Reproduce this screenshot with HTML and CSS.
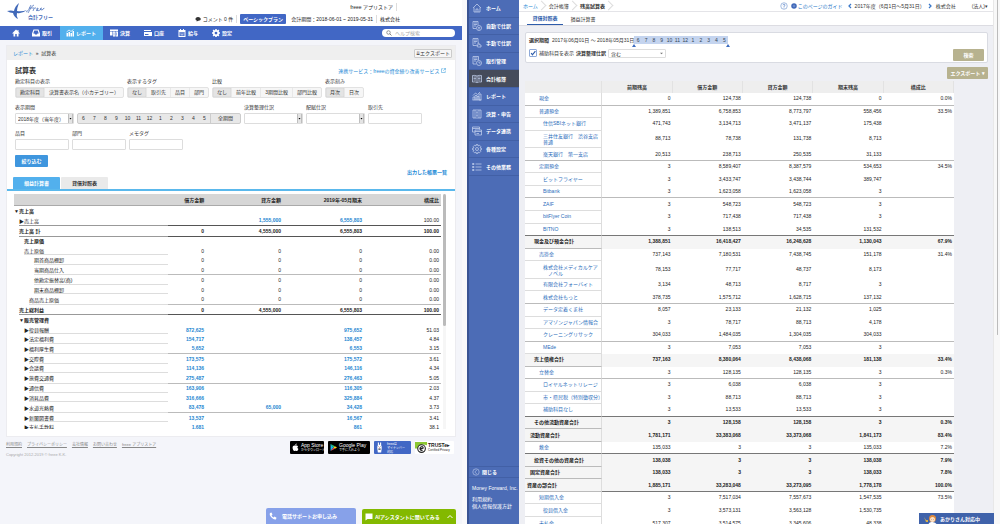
FILE: index.html
```html
<!DOCTYPE html>
<html lang="ja">
<head>
<meta charset="utf-8">
<title>試算表</title>
<link rel="stylesheet" href="styles.css">
</head>
<body>
<div class="windows">

<section class="fr">
  <div class="fr-page">
    <header class="fr-head">
      <svg class="fr-logo" viewBox="0 0 48 18" role="img" aria-label="freee 会計フリー">
        <path d="M0 8Q4 7 7 8Q8 3 12 0Q10 5 10 8Q15 9 20 7Q15 11 10 10Q9 13 11 16Q7 14 6 10Q3 10 0 8Z" fill="#4068b8"/>
        <path d="M19 9C22 8 22 5 24 2M21 10C23 7 24 3 27 2M22 5L27 5M26 8L27 5.500Q28 4.500 29 5M29 8Q32 6 31 5Q29 5 30 7.500Q32 8.500 34 6Q35 4 33.500 5.500Q33 8 36 6.500Q38 4 36.500 5.500" fill="none" stroke="#4068b8" stroke-width=".7"/>
        <text x="21" y="16" class="fr-logo-text">会計フリー</text>
      </svg>
      <div class="fr-head-info">
        <div class="fr-head-row"><a href="#" class="plain">freee アプリストア</a><i class="vsep"></i></div>
        <div class="fr-head-row">
          <svg class="ic6" viewBox="0 0 12 12"><path d="M6 2C2.500 2 1 4 1 6S2.500 9 4 9L3 11L7 9.500C10 9.500 11.500 8 11.500 6S9.500 2 6 2Z" fill="#333"/></svg>
          <a href="#" class="plain">コメント 0 件</a><i class="vsep"></i>
          <button class="plan">ベーシックプラン</button>
          <span class="period">会計期間：2018-06-01 ~ 2019-05-31</span><i class="vsep"></i>
          <span class="fr-company">株式会社</span>
        </div>
      </div>
    </header>
    <nav class="fr-nav">
      <a href="#" class="n-home" aria-label="ホーム"><svg class="ic8" viewBox="0 0 16 16"><path d="M8 1L0 9H3V15H6.500V10H9.500V15H13V9H16L13 6V2H11V4Z" fill="#fff"/></svg></a>
      <a href="#" class="n-2"><svg class="ic8" viewBox="0 0 16 16"><path d="M3 1H13L16 9V15H0V9ZM4.500 3L2.500 9H5L6 11H10L11 9H13.500L11.500 3Z" fill="#fff" fill-rule="evenodd"/></svg>取引</a>
      <a href="#" class="n-3 on"><svg class="ic8" viewBox="0 0 16 16"><path d="M1 8H4V15H1ZM5 6H8V15H5ZM9 8H12V15H9ZM13 4H16V15H13Z" fill="#fff"/><path d="M1 6L6 2L10 5L15 1" stroke="#fff" stroke-width="1.500" fill="none"/></svg>レポート</a>
      <a href="#" class="n-4"><svg class="ic8" viewBox="0 0 16 16"><path d="M0 1H16V4H0ZM0 5H5V13H0ZM6 5H10V15H6ZM11 5H16V15H11ZM12 7V13H13V7ZM7.500 7V13H8.500V7Z" fill="#fff" fill-rule="evenodd"/></svg>決算</a>
      <a href="#" class="n-5"><svg class="ic8" viewBox="0 0 16 16"><path d="M0 2H14V4H0ZM0 6H16V14H0ZM2 10V12H9V10Z" fill="#fff" fill-rule="evenodd"/></svg>口座</a>
      <a href="#" class="n-6"><svg class="ic8" viewBox="0 0 16 16"><path d="M2 2H4V0H6V2H10V0H12V2H15V16H1V2ZM3 6V14H13V6ZM5 7H7V9H5ZM9 7H11V9H9ZM5 11H11V12.500H5Z" fill="#fff" fill-rule="evenodd"/></svg>給与</a>
      <a href="#" class="n-7"><svg class="ic8" viewBox="0 0 16 16"><circle cx="8" cy="8" r="4.500" fill="none" stroke="#fff" stroke-width="3.500"/><path d="M8 0V3M8 13V16M0 8H3M13 8H16M2.300 2.300L4.500 4.500M11.500 11.500L13.700 13.700M2.300 13.700L4.500 11.500M11.500 4.500L13.700 2.300" stroke="#fff" stroke-width="3"/></svg>設定</a>
      <label class="fr-search"><svg class="ic6" viewBox="0 0 12 12"><circle cx="5" cy="5" r="3.500" fill="none" stroke="#777" stroke-width="1.500"/><path d="M7.500 7.500L11 11" stroke="#777" stroke-width="1.800"/></svg><input type="search" placeholder="ヘルプ検索" aria-label="ヘルプ検索"></label>
    </nav>
    <main class="panel">
      <div class="crumbs"><span><a href="#">レポート</a>&nbsp; » &nbsp;試算表</span><button class="btn-lite">⇊エクスポート</button></div>
      <div class="panel-body">
        <div class="title-row"><h1>試算表</h1><a href="#">連携サービス：freeeの資金繰り改善サービス <svg class="ic4" viewBox="0 0 10 10"><path d="M5 1.500H1V9H8.500V5M6 1H9V4M9 1L4.500 5.500" fill="none" stroke="#2f96d8"/></svg></a></div>
        <div class="fields">
          <div class="field"><span>勘定科目の表示</span><div class="seg"><button class="on">勘定科目</button><button>決算書表示名（小カテゴリー）</button></div></div>
          <div class="field"><span>表示するタグ</span><div class="seg"><button class="on">なし</button><button>取引先</button><button>品目</button><button>部門</button></div></div>
          <div class="field"><span>比較</span><div class="seg"><button class="on">なし</button><button>前年比較</button><button>3期間比較</button><button>部門比較</button></div></div>
          <div class="field"><span>表示刻み</span><div class="seg"><button class="on">月次</button><button>日次</button></div></div>
        </div>
        <div class="fields">
          <div class="field"><label for="term">表示期間</label><div class="pair"><select id="term" class="sel"><option>2018年度（当年度）</option></select>
            <div class="seg months"><button>6</button><button>7</button><button>8</button><button>9</button><button>10</button><button>11</button><button>12</button><button>1</button><button>2</button><button>3</button><button>4</button><button>5</button><button class="all">全期間</button></div></div></div>
          <div class="field"><label for="adj">決算整理仕訳</label><select id="adj" class="sel"><option></option></select></div>
          <div class="field"><label for="alloc">配賦仕訳</label><select id="alloc" class="sel"><option></option></select></div>
          <div class="field"><label for="partner">取引先</label><input id="partner" class="inp"></div>
        </div>
        <div class="fields">
          <div class="field"><label for="item">品目</label><input id="item" class="inp"></div>
          <div class="field"><label for="dept">部門</label><input id="dept" class="inp"></div>
          <div class="field"><label for="memo">メモタグ</label><input id="memo" class="inp"></div>
        </div>
        <button class="btn-blue">絞り込む</button>
      </div>
      <div class="tabs"><button class="on">損益計算書</button><button>貸借対照表</button><a href="#">出力した帳票一覧</a></div>
      <div class="sheet">
        <div class="scroll">
        <table class="pl">
          <colgroup><col class="c1"><col class="c2"><col class="c3"><col class="c4"><col class="c3"></colgroup>
          <thead><tr><th></th><th>借方金額</th><th>貸方金額</th><th>2019年-05月期末</th><th>構成比</th></tr></thead>
          <tbody>
          <tr class="b"><td>▼売上高<td><td><td><td></tr>
          <tr class="i1 dk"><td>▶売上高<td><td><a href="#">1,555,000</a><td><a href="#">6,555,803</a><td>100.00</tr>
          <tr class="i1 b dk"><td>売上高 計<td>0<td>4,555,000<td>6,555,803<td>100.00</tr>
          <tr class="i2 b nl"><td>売上原価<td><td><td><td></tr>
          <tr class="i2"><td>売上原価<td>0<td>0<td>0<td>0.00</tr>
          <tr class="i4"><td>期首商品棚卸<td>0<td>0<td>0<td>0.00</tr>
          <tr class="i4 gr"><td>当期商品仕入<td>0<td>0<td>0<td>0.00</tr>
          <tr class="i4"><td>他勘定振替高(商)<td>0<td>0<td>0<td>0.00</tr>
          <tr class="i4"><td>期末商品棚卸<td>0<td>0<td>0<td>0.00</tr>
          <tr class="i3 gr"><td>商品売上原価<td>0<td>0<td>0<td>0.00</tr>
          <tr class="i1 b dk"><td>売上総利益<td>0<td>4,555,000<td>6,555,803<td>100.00</tr>
          <tr class="i1 b nl"><td>▼販売管理費<td><td><td><td></tr>
          <tr class="i2 s"><td>▶役員報酬<td><a href="#">872,625</a><td><td><a href="#">975,652</a><td>51.03</tr>
          <tr class="i2 s"><td>▶法定福利費<td><a href="#">154,717</a><td><td><a href="#">138,457</a><td>4.84</tr>
          <tr class="i2 s gr"><td>▶福利厚生費<td><a href="#">5,652</a><td><td><a href="#">6,553</a><td>3.15</tr>
          <tr class="i2 s"><td>▶交際費<td><a href="#">173,575</a><td><td><a href="#">175,572</a><td>3.61</tr>
          <tr class="i2 s"><td>▶会議費<td><a href="#">114,136</a><td><td><a href="#">146,116</a><td>4.34</tr>
          <tr class="i2 s gr"><td>▶旅費交通費<td><a href="#">275,487</a><td><td><a href="#">276,463</a><td>5.05</tr>
          <tr class="i2 s"><td>▶通信費<td><a href="#">163,906</a><td><td><a href="#">116,305</a><td>2.03</tr>
          <tr class="i2 s"><td>▶消耗品費<td><a href="#">316,666</a><td><td><a href="#">325,884</a><td>4.37</tr>
          <tr class="i2 s gr"><td>▶水道光熱費<td><a href="#">83,478</a><td><a href="#">65,000</a><td><a href="#">34,428</a><td>3.73</tr>
          <tr class="i2 s"><td>▶新聞図書費<td><a href="#">13,537</a><td><td><a href="#">16,567</a><td>3.41</tr>
          <tr class="i2 s nl"><td>▶支払手数料<td><a href="#">1,681</a><td><td><a href="#">861</a><td>38.1</tr>
          </tbody>
        </table>
        </div>
        <div class="track"><div class="thumb"></div></div>
      </div>
    </main>
    <footer class="fr-foot">
      <div><p class="foot-links"><a href="#">利用規約</a><a href="#">プライバシーポリシー</a><a href="#">会社情報</a><a href="#">お問い合わせ</a><a href="#">freee アプリストア</a></p>
      <p class="copy">Copyright 2012-2019 © freee K.K.</p></div>
      <div class="badges">
        <a href="#" class="badge app"><svg viewBox="0 0 12 14"><path d="M8 0C8 2 7 3 5.500 3C5.500 1.500 6.500 .5 8 0ZM6 4C7 3.500 9 3 10.500 5C8.500 6.500 9 8.500 11 9.500C10 12 9 13.500 7.500 13C6.500 12.500 6 12.500 5 13C3 14 1 10 1 7.500C1 4 3.500 3 6 4Z" fill="#fff"/></svg><span><b>App Store</b><small>からダウンロード</small></span></a>
        <a href="#" class="badge play"><svg viewBox="0 0 12 14"><path d="M1 1V13L6 7Z" fill="#19b8f0"/><path d="M1 1L8.500 5L6 7Z" fill="#20d070"/><path d="M1 13L8.500 9L6 7Z" fill="#f04050"/><path d="M8.500 5L12 7L8.500 9L6 7Z" fill="#ffd020"/></svg><span><b>Google Play</b><small>で手に入れよう</small></span></a>
        <a href="#" class="badge mynum"><svg viewBox="0 0 12 20"><path d="M3 1H5V5H7V1H9V6L10 8V12L9 19H3L2 12V8L3 6Z" fill="#fff"/><path d="M4 8H5V9H4ZM7 8H8V9H7ZM4 12H8V14H4Z" fill="#345"/><path d="M5 10H7V11H5Z" fill="#e55"/></svg><small>freeeは<br>マイナンバー<br>対応</small></a>
        <a href="#" class="badge truste"><svg viewBox="0 0 22 20"><path d="M0 0H22V6L14 4L4 12H0Z" fill="#8cc832"/><circle cx="12" cy="12" r="7" fill="#fff" stroke="#222" stroke-width="2"/><path d="M9 13L15 11Q15 8 12 8.500Q9 9 9 12.500Q10 16 14 15" fill="none" stroke="#222" stroke-width="2"/></svg><span><b>TRUSTe▸</b><small>Certified Privacy</small></span></a>
      </div>
    </footer>
    <div class="chat">
      <button class="phone"><svg class="ic8" viewBox="0 0 16 16"><path d="M2 2L5 1L7 5L5 7Q6.500 10 9 11L11 9L15 11.500L14 14.500Q10 16 5 11T2 2Z" fill="#fff"/></svg><span>電話サポートお申し込み</span></button>
      <button class="ai"><svg class="ic8" viewBox="0 0 16 16"><path d="M1 1H15V12H5L1 15Z" fill="#fff"/></svg><span>AIアシスタントに聞いてみる</span><svg class="ic6" viewBox="0 0 12 12"><path d="M1 8L6 3L11 8" fill="none" stroke="#fff" stroke-width="2"/></svg></button>
    </div>
  </div>
</section>

<section class="mf">
  <aside class="side">
    <nav class="side-nav">
      <a href="#"><svg viewBox="0 0 20 20"><path d="M2 10L10 2L18 10M4 9V18H16V9M8 18V12H12V18"/></svg>ホーム</a>
      <a href="#"><svg viewBox="0 0 20 20"><path d="M8 15H2V1H12V8M4 4H10M4 7H10M4 10H8"/><circle cx="14" cy="14" r="5"/><path d="M12 12L14 14.500L16 12M14 14V17"/></svg>自動で仕訳</a>
      <a href="#"><svg viewBox="0 0 20 20"><path d="M8 15H2V1H12V8M4 4H10M4 7H10M4 10H8M11 18L9 14L12 15V9L14 10V13L18 14V18Z"/></svg>手動で仕訳</a>
      <a href="#"><svg viewBox="0 0 20 20"><path d="M8 16H2V1H13V8M4 4H11M4 7H11M4 10H8"/><circle cx="14" cy="14" r="5"/><path d="M14 11V14H17"/></svg>取引管理</a>
      <a href="#" class="on"><svg viewBox="0 0 20 20"><path d="M10 4Q6 2 1 3V16Q6 15 10 17Q14 15 19 16V3Q14 2 10 4V17M3 6H8M3 9H8M3 12H8M12 6H17M12 9H17M12 12H17"/></svg>会計帳簿</a>
      <a href="#"><svg viewBox="0 0 20 20"><path d="M2 18V12H6V18M6 18V9H10V18M10 18V11H14V18M14 18V6H18V18ZM2 9L7 4L11 7L16 2M1 18H19"/></svg>レポート</a>
      <a href="#"><svg viewBox="0 0 20 20"><path d="M2 2H18V18H2ZM6 2V18M14 2V18M8 6H12M8 14H12M10 6V14"/></svg>決算・申告</a>
      <a href="#"><svg viewBox="0 0 20 20"><path d="M6 12H1V2H15V7M1 5H15M6 8H19V18H6ZM6 11H19M9 15H14"/></svg>データ連携</a>
      <a href="#"><svg viewBox="0 0 20 20"><circle cx="10" cy="10" r="3"/><path d="M8.500 1H11.500L12 4L15 2.500L17.500 5L16 8L19 8.500V11.500L16 12L17.500 15L15 17.500L12 16L11.500 19H8.500L8 16L5 17.500L2.500 15L4 12L1 11.500V8.500L4 8L2.500 5L5 2.500L8 4Z"/></svg>各種設定</a>
      <a href="#"><svg viewBox="0 0 20 20"><path d="M7 4H19M7 10H19M7 16H19M1 3H4V5H1ZM1 9H4V11H1ZM1 15H4V17H1Z"/></svg>その他業務</a>
    </nav>
    <button class="close"><svg viewBox="0 0 20 20"><circle cx="10" cy="10" r="8"/><path d="M12 5L7 10L12 15"/></svg>閉じる</button>
    <p class="side-foot"><a href="#">Money Forward, Inc.</a><a href="#" class="gap">利用規約</a><a href="#">個人情報保護方針</a></p>
  </aside>
  <div class="mf-main">
    <div class="mf-top">
      <ol class="path"><li><a href="#">ホーム</a></li><li>会計帳簿</li><li><b>残高試算表</b></li></ol>
      <div class="mf-user">
        <svg class="ic8" viewBox="0 0 16 16"><circle cx="8" cy="8" r="6.500" fill="#fff" stroke="#4a78c4"/><path d="M6 6.500Q6 4.500 8 4.500T10 6.500Q10 7.500 8 8.500V10M8 11V12.500" fill="none" stroke="#4a78c4" stroke-width="1.300"/></svg>
        <a href="#" class="guide"><svg class="ic6" viewBox="0 0 12 12"><circle cx="6" cy="6" r="5.500" fill="#4068b8"/><path d="M3.500 6H8.500M6 3.500V8.500" stroke="#9db5e0"/></svg>このページのガイド</a>
        <svg class="ic6" viewBox="0 0 12 12"><path d="M8 2L4 6L8 10" fill="none" stroke="#3a78c8" stroke-width="2.500"/></svg>
        <span>2017年度（6月1日〜5月31日）</span>
        <svg class="ic6" viewBox="0 0 12 12"><path d="M4 2L8 6L4 10" fill="none" stroke="#3a78c8" stroke-width="2.500"/></svg>
        <span class="org">株式会社</span><span>(法人)▾</span>
      </div>
    </div>
    <div class="mf-tabs"><a href="#" class="on">貸借対照表</a><a href="#">損益計算書</a></div>
    <div class="mf-body">
      <div class="filter">
        <div class="filter-fields">
          <div class="frow"><b>選択期間</b><span class="dates">2017年06月01日 ～ 2018年05月31日</span>
            <div class="range"><span>6</span><span>7</span><span>8</span><span>9</span><span>10</span><span>11</span><span>12</span><span>1</span><span>2</span><span>3</span><span>4</span><span>5</span><i class="knob l"></i><i class="knob r"></i></div></div>
          <div class="frow"><label class="chk"><input type="checkbox" checked>補助科目を表示</label><label class="adj"><b>決算整理仕訳</b><select><option>含む</option></select></label></div>
        </div>
        <button class="btn-khaki search">検索</button>
      </div>
      <div class="export"><button class="btn-khaki">エクスポート ▾</button></div>
      <table class="bs">
        <colgroup><col class="n"><col><col><col><col><col></colgroup>
        <thead><tr><th></th><th>前期残高</th><th>借方金額</th><th>貸方金額</th><th>期末残高</th><th>構成比</th></tr></thead>
        <tbody>
        <tr class="gr"><td><a href="#">現金</a><td>0<td>124,738<td>124,738<td>0<td>0.0%</tr>
        <tr><td><a href="#">普通預金</a><td>1,389,851<td>6,758,853<td>8,773,797<td>558,456<td>33.5%</tr>
        <tr class="sub"><td><a href="#">住信SBIネット銀行</a><td>471,743<td>3,134,713<td>3,471,137<td>175,438<td></tr>
        <tr class="sub two"><td><a href="#">三井住友銀行　渋谷支店普通</a><td>88,713<td>78,738<td>131,738<td>8,713<td></tr>
        <tr class="sub gr"><td><a href="#">楽天銀行　第一支店</a><td>20,513<td>238,713<td>250,535<td>31,133<td></tr>
        <tr><td><a href="#">定期預金</a><td>3<td>8,589,407<td>8,387,579<td>534,653<td>34.5%</tr>
        <tr class="sub"><td><a href="#">ビットフライヤー</a><td>3<td>3,433,747<td>3,438,744<td>389,747<td></tr>
        <tr class="sub gr"><td><a href="#">Bitbank</a><td>3<td>1,623,058<td>1,623,058<td>3<td></tr>
        <tr class="sub"><td><a href="#">ZAIF</a><td>3<td>548,723<td>548,723<td>3<td></tr>
        <tr class="sub"><td><a href="#">bitFlyer Coin</a><td>3<td>717,438<td>717,438<td>3<td></tr>
        <tr class="sub dk"><td><a href="#">BITNO</a><td>3<td>138,513<td>34,535<td>131,532<td></tr>
        <tr class="t"><td>現金及び預金合計<td>1,388,851<td>16,418,427<td>16,248,628<td>1,130,043<td>67.9%</tr>
        <tr><td><a href="#">売掛金</a><td>737,143<td>7,180,531<td>7,438,745<td>151,178<td>31.4%</tr>
        <tr class="sub two"><td><a href="#">株式会社メディカルケア<br>　ノベル</a><td>78,153<td>77,717<td>48,737<td>8,173<td></tr>
        <tr class="sub"><td><a href="#">有限会社フォーバイト</a><td>3,134<td>48,713<td>8,717<td>3<td></tr>
        <tr class="sub gr"><td><a href="#">株式会社もっと</a><td>378,735<td>1,575,712<td>1,628,715<td>137,132<td></tr>
        <tr class="sub"><td><a href="#">データ定着くま社</a><td>8,057<td>23,133<td>21,132<td>1,025<td></tr>
        <tr class="sub"><td><a href="#">アマゾンジャパン情報合</a><td>3<td>78,717<td>88,713<td>4,178<td></tr>
        <tr class="sub gr"><td><a href="#">クレーニングリサック</a><td>304,033<td>1,484,035<td>1,304,035<td>304,033<td></tr>
        <tr class="sub"><td><a href="#">MEde</a><td>3<td>7,053<td>7,053<td>3<td></tr>
        <tr class="t"><td>売上債権合計<td>737,163<td>8,380,064<td>8,438,068<td>181,138<td>33.4%</tr>
        <tr class="gr"><td><a href="#">立替金</a><td>3<td>128,135<td>128,135<td>3<td>0.3%</tr>
        <tr class="sub"><td><a href="#">ロイヤルネットリレージ</a><td>3<td>6,038<td>6,038<td>3<td></tr>
        <tr class="sub"><td><a href="#">市・県民税（特別徴収分）</a><td>3<td>88,713<td>88,713<td>3<td></tr>
        <tr class="sub dk"><td><a href="#">補助科目なし</a><td>3<td>13,533<td>13,533<td>3<td></tr>
        <tr class="t"><td>その他流動資産合計<td>3<td>128,158<td>128,158<td>3<td>0.3%</tr>
        <tr class="t o1"><td>流動資産合計<td>1,781,171<td>33,383,068<td>33,373,068<td>1,841,173<td>83.4%</tr>
        <tr class="dk"><td><a href="#">敷金</a><td>135,033<td>3<td>3<td>135,033<td>7.2%</tr>
        <tr class="t"><td>投資その他の資産合計<td>138,038<td>3<td>3<td>138,038<td>7.9%</tr>
        <tr class="t o1"><td>固定資産合計<td>138,033<td>3<td>3<td>138,033<td>7.8%</tr>
        <tr class="t o0 dk"><td>資産の部合計<td>1,885,171<td>33,283,048<td>33,273,095<td>1,778,178<td>100.0%</tr>
        <tr><td><a href="#">短期借入金</a><td>3<td>7,517,034<td>7,557,673<td>1,547,535<td>73.5%</tr>
        <tr class="sub"><td><a href="#">役員借入金</a><td>3<td>3,573,131<td>3,563,128<td>1,530,735<td></tr>
        <tr><td><a href="#">未払金</a><td>517,307<td>3,514,575<td>3,345,606<td>48,338<td></tr>
        </tbody>
      </table>
    </div>
    <button class="assist"><svg viewBox="0 0 26 20"><path d="M0 6L4 12L8 12V16H4Z" fill="#d8b04a"/><circle cx="17" cy="9" r="7" fill="#e08a3c"/><circle cx="17" cy="11" r="5" fill="#fbe0c4"/><path d="M9 20Q11 15 17 16T25 20Z" fill="#fff"/><path d="M14 11H15V12H14ZM19 11H20V12H19Z" fill="#633"/></svg>あかりさん対応中</button>
  </div>
  <div class="mf-track"><div class="mf-thumb"></div></div>
</section>

</div>
</body>
</html>
```
FILE: styles.css
```css
* { box-sizing: border-box; }
body { margin: 0; background: #f4f5fa; color: #333; font: 5px/8px "Liberation Sans", "Noto Sans CJK JP", sans-serif; }
a { color: #1c8ad6; text-decoration: none; }
p, h1, ol { margin: 0; padding: 0; }
button, input, select { font: inherit; color: inherit; margin: 0; padding: 0; border: 0; border-radius: 0; min-width: 0; outline: 0; }
svg { flex: none; display: block; }
.ic4 { width: 5px; height: 5px; display: inline-block; }
.ic6 { width: 6px; height: 6px; }
.ic8 { width: 8px; height: 8px; }
.plain { color: #222; }
.windows { display: grid; grid-template-columns: 467fr 533fr; height: 100vh; overflow: hidden; }

/* left window */
.fr { background: #f9f9fb; padding-right: 5px; overflow: hidden; }
.fr-page { position: relative; height: 100vh; background: #f4f5fa; }
.fr-head { display: flex; justify-content: space-between; height: 26px; padding: 3px 62px 0 7px; background: #fff; }
.fr-logo { width: 48px; height: 18px; }
.fr-logo-text { font-size: 5px; font-weight: bold; fill: #4068b8; }
.fr-head-info { display: flex; flex-direction: column; align-items: flex-end; color: #222; }
.fr-head-row { display: flex; align-items: center; height: 8px; gap: 2px; padding-right: 2px; }
.fr-head-row + .fr-head-row { height: 10px; margin-top: 3px; padding-right: 0; }
.vsep { width: 1px; height: 8px; background: #ddd; margin: 0 1px; }
.plan { background: #4167c5; color: #fff; font-weight: bold; border-radius: 1px; height: 10px; padding: 0 3px; }
.period { padding-left: 3px; }
.fr-nav { display: flex; align-items: stretch; height: 14px; background: #4167c5; }
.fr-nav a { display: flex; align-items: center; gap: 2px; color: #fff; font-weight: bold; padding: 0 7px; }
.fr-nav .n-home { padding: 0 8px 0 12px; }
.fr-nav .n-2 { padding: 0 8px 0 4px; }
.fr-nav .on { background: #52b0ed; padding: 0 7px 0 6px; }
.fr-search { display: flex; align-items: center; gap: 3px; margin: 3px 7px 3px auto; width: 73px; padding: 0 4px; background: #fff; border-radius: 4px; }
.fr-search input { flex: 1; width: 100%; background: none; appearance: none; height: 7px; }
.fr-search input::placeholder { color: #aaa; }
.panel { margin: 6px 7px 0; background: #fff; outline: 1px solid #ececf0; }
.crumbs { display: flex; justify-content: space-between; align-items: center; height: 14px; padding: 0 3px 0 6px; background: #efefef; }
.btn-lite { height: 9px; width: 38px; background: #f6f6f6; border: 1px solid #ccc; line-height: 7px; border-radius: 1px; }
.panel-body { display: flex; flex-direction: column; align-items: flex-start; gap: 5px; padding: 6px 8px 0; }
.title-row { display: flex; align-items: center; justify-content: space-between; width: 100%; height: 10px; padding-right: 1px; margin-bottom: -4px; }
h1 { font-size: 7px; line-height: 10px; color: #333; }
.fields { display: flex; gap: 3px; }
.field { display: flex; flex-direction: column; gap: 2px; }
.pair { display: flex; gap: 3px; }
.seg { display: flex; border: 1px solid #e2e2e2; border-radius: 2px; background: #f6f6f6; height: 11px; }
.seg button { background: none; padding: 0 4px; line-height: 9px; border-right: 1px solid #e8e8e8; }
.seg button:last-child { border-right: 0; }
.seg .on { background: #e4e4e4; box-shadow: inset 0 0 1px #aaa; }
.seg.months { background: #e8e8e8; border-color: #ccc; }
.seg.months button { width: 11px; padding: 0; border: 0; }
.seg.months .all { width: 30px; border-left: 1px solid #ccc; }
.sel { appearance: none; width: 59px; height: 11px; padding-left: 2px; border: 1px solid #ddd; border-radius: 1px; background: url("data:image/svg+xml,%3Csvg xmlns='http://www.w3.org/2000/svg' viewBox='0 0 5 9'%3E%3Crect width='5' height='9' fill='%23e4e4e4'/%3E%3Cpath d='M0 0V9M5 0V9' stroke='%23999'/%3E%3Cpath d='M1.500 4H3.500L2.500 5.500Z' fill='%23000'/%3E%3C/svg%3E") right center / 5px 9px no-repeat #fff; }
.inp { width: 54px; height: 11px; border: 1px solid #ddd; border-radius: 1px; background: #fff; padding: 0 2px; }
.btn-blue { height: 12px; width: 33px; background: #3f96de; color: #fff; font-weight: bold; border-radius: 1px; }
.tabs { display: flex; align-items: flex-end; gap: 1px; height: 24px; padding: 1px 8px 0 6px; border-bottom: 2px solid #5ab8ec; }
.tabs button { height: 12px; width: 47px; background: #eaeaea; font-weight: bold; border-radius: 1px 1px 0 0; }
.tabs button.on { background: #52b0ed; color: #fff; }
.tabs a { margin-left: auto; align-self: flex-start; font-weight: bold; }
.sheet { display: flex; gap: 2px; padding: 3px 9px 7px 7px; }
.scroll { flex: 1; height: 235px; overflow: hidden; }
.track { width: 3px; background: #f6f6f6; }
.thumb { height: 56%; background: #bbb; border-radius: 2px; }
table { border-collapse: separate; border-spacing: 0; table-layout: fixed; width: 100%; }
td, th { padding: 0; text-align: right; white-space: nowrap; }
.pl { height: 238px; color: #222; }
.pl .c1 { width: 36%; }
.pl .c2 { width: 9%; }
.pl .c3 { width: 18%; }
.pl .c4 { width: 19%; }
.pl th { height: 12px; background: #d6d6d6; border-bottom: 1px solid #aaa; padding-right: 2px; }
.pl td { position: relative; padding-right: 2px; }
.pl td a { color: #1c86d1; font-weight: bold; }
.pl td:first-child { text-align: left; }
.pl td:first-child::after { content: ""; position: absolute; left: 0; right: 0; bottom: 0; height: 1px; background: #ddd; }
.pl .b:not(.dk) td::after, .pl .nl td::after { display: none; }
.pl .b { font-weight: bold; }
.pl .i1 td:first-child { padding-left: 5px; }
.pl .i1 td:first-child::after { left: 5px; }
.pl .i2 td:first-child { padding-left: 10px; }
.pl .i2 td:first-child::after { left: 10px; }
.pl .s td:first-child::after { left: 15px; }
.pl .i3 td:first-child { padding-left: 15px; }
.pl .i3 td:first-child::after { left: 15px; }
.pl .i4 td:first-child { padding-left: 20px; }
.pl .i4 td:first-child::after { left: 20px; }
.pl .gr td:not(:first-child) { border-bottom: 1px solid #bbb; }
.pl .dk td:not(:first-child) { border-bottom: 1px solid #555; }
.pl .dk td:first-child::after { background: #999; }
.fr-foot { display: flex; justify-content: space-between; padding: 5px 8px 0 6px; font-size: 4px; }
.foot-links { display: flex; gap: 5px; }
.foot-links a { color: #888; text-decoration: underline; }
.copy { color: #aaa; margin-top: 2px; }
.badges { display: flex; gap: 4px; }
.badge { display: flex; align-items: center; gap: 2px; height: 13px; padding: 0 2px; border-radius: 1px; background: #000; color: #fff; line-height: 5px; }
.badge span { display: flex; flex-direction: column; }
.badge b { font-size: 5px; font-weight: normal; }
.badge small { font-size: 3px; line-height: 4px; white-space: nowrap; }
.badge svg { width: 7px; height: 9px; }
.app { width: 34px; }
.play { width: 42px; }
.mynum { width: 37px; background: #4167c5; gap: 4px; }
.mynum svg { height: 11px; }
.truste { width: 39px; background: #fff; color: #222; padding: 0; gap: 1px; overflow: hidden; }
.truste svg { width: 12px; height: 11px; }
.truste b { font-weight: bold; }
.chat { position: absolute; right: 6px; bottom: 0; display: flex; align-items: flex-end; gap: 6px; color: #fff; font-weight: bold; }
.chat button { display: flex; align-items: center; padding: 0 3px; border-radius: 2px 2px 0 0; }
.phone { width: 90px; height: 16px; background: #87a1e9; gap: 5px; }
.ai { width: 94px; height: 15px; background: #83b900; gap: 2px; }
.ai span { flex: 1; text-align: left; white-space: nowrap; }

/* right window */
.mf { display: flex; overflow: hidden; background: #eeeff4; }
.side { display: flex; flex-direction: column; width: 52px; flex: none; background: #4c6cb6; border-left: 2px solid #3a5493; color: #fff; }
.side a { color: #fff; }
.side svg { width: 10px; height: 10px; fill: none; stroke: #c3d0ee; stroke-width: 1.5; }
.side-nav { display: grid; grid-auto-rows: 1fr; height: 176px; margin-bottom: auto; }
.side-nav a { display: flex; align-items: center; gap: 4px; padding-left: 3px; font-weight: bold; border-bottom: 1px solid #4260a6; }
.side-nav .on { background: #454b5a; }
.close { display: flex; align-items: center; gap: 2px; height: 12px; padding-left: 3px; background: none; border-top: 1px solid #4260a6; border-bottom: 1px solid #4260a6; font-weight: bold; }
.side .close svg { width: 8px; height: 8px; }
.side-foot { display: flex; flex-direction: column; padding: 7px 0 14px 3px; line-height: 7px; white-space: nowrap; }
.side-foot .gap { margin-top: 4px; }
.mf-main { position: relative; flex: 1; min-width: 0; }
.mf-top { display: flex; justify-content: space-between; align-items: center; height: 12px; padding: 0 5px 0 4px; background: #fff; border-bottom: 1px solid #e4e4e8; }
.path { display: flex; list-style: none; }
.path li { display: flex; align-items: center; }
.path li::after { content: ""; width: 6px; height: 6px; margin: 0 4px 0 0; border: solid #ddd; border-width: 1px 1px 0 0; transform: rotate(45deg); }
.mf-user { display: flex; align-items: center; gap: 2px; }
.guide { display: flex; align-items: center; gap: 1px; color: #2b78c8; margin: 0 2px 0 1px; }
.org { margin: 0 14px 0 1px; }
.mf-tabs { display: flex; gap: 2px; height: 14px; padding-left: 8px; background: #fff; border-bottom: 1px solid #dcdce2; }
.mf-tabs a { display: flex; align-items: center; justify-content: center; width: 36px; color: #333; }
.mf-tabs .on { color: #2d5cab; font-weight: bold; border-bottom: 1px solid #2d5cab; }
.mf-body { padding: 6px 5px 0 6px; }
.filter { display: flex; justify-content: space-between; height: 31px; padding: 1px 3px; background: #fff; border: 1px solid #d9dbe2; border-radius: 2px; }
.filter-fields { display: flex; flex-direction: column; gap: 4px; padding-top: 1px; }
.frow { display: flex; align-items: center; height: 9px; }
.frow + .frow { height: 10px; }
.dates { margin-left: 3px; }
.range { position: relative; display: flex; width: 94px; height: 8px; background: #c4d4ef; color: #345; }
.range span { flex: 1; text-align: center; }
.knob { position: absolute; top: 8px; border: 2px solid transparent; border-top: 0; border-bottom: 3px solid #3d6cc0; }
.knob.l { left: -2px; }
.knob.r { right: -2px; }
.chk { display: flex; align-items: center; gap: 2px; }
.chk input { appearance: none; width: 8px; height: 8px; border: 1px solid #8ea9d8; border-radius: 1px; background: url("data:image/svg+xml,%3Csvg xmlns='http://www.w3.org/2000/svg' viewBox='0 0 10 10'%3E%3Cpath d='M2 5L4 8L9 2' fill='none' stroke='%232d5cab' stroke-width='2'/%3E%3C/svg%3E") center / 6px 6px no-repeat; }
.adj { display: flex; align-items: center; gap: 2px; margin-left: 2px; }
.adj select { appearance: none; width: 58px; height: 9px; padding-left: 2px; border: 1px solid #ddd; border-radius: 1px; background: url("data:image/svg+xml,%3Csvg xmlns='http://www.w3.org/2000/svg' viewBox='0 0 4 4'%3E%3Cpath d='M0 1H4L2 3Z' fill='%23777'/%3E%3C/svg%3E") right 2px center / 3px 3px no-repeat #fff; }
.btn-khaki { height: 12px; width: 41px; background: #b7b28f; color: #fff; font-weight: bold; border-radius: 1px; }
.btn-khaki.search { width: 31px; align-self: flex-end; }
.export { display: flex; justify-content: flex-end; padding: 4px 0 2px; }
.bs { width: calc(100% - 34px); height: 449px; background: #fff; color: #222; }
.bs .n { width: 18%; }
.bs th { height: 12px; background: #eeeeee; color: #333; text-align: center; border-right: 1px solid #e2e2e2; }
.bs td { height: 12px; padding-right: 2px; border-bottom: 1px solid transparent; line-height: 7px; }
.bs td:first-child { text-align: left; padding: 0 0 0 14px; border-right: 1px solid #ddd; border-bottom-color: #ddd; }
.bs td a { color: #2a6dbb; }
.bs .sub td:first-child { padding-left: 18px; }
.bs .two td { height: 17px; }
.bs .two td:first-child { white-space: normal; line-height: 6px; }
.bs .gr td { border-bottom-color: #bbb; }
.bs .dk td { border-bottom-color: #777; }
.bs .t { background: #f5f5f5; font-weight: bold; }
.bs .t td:first-child { padding-left: 9px; border-bottom-color: #bbb; }
.bs .o1 td:first-child { padding-left: 5px; }
.bs .o0 td:first-child { padding-left: 2px; }
.assist { position: absolute; right: -1px; bottom: 0; display: flex; align-items: center; gap: 3px; width: 75px; height: 11px; padding-left: 5px; background: #3f62aa; color: #fff; font-weight: bold; }
.assist svg { width: 13px; height: 10px; }
.mf-track { width: 7px; padding: 0 2px 0 3px; background: #f8f8f8; border-left: 1px solid #e8e8e8; }
.mf-thumb { height: 64%; background: #bbb; border-radius: 0 0 2px 2px; }
```
